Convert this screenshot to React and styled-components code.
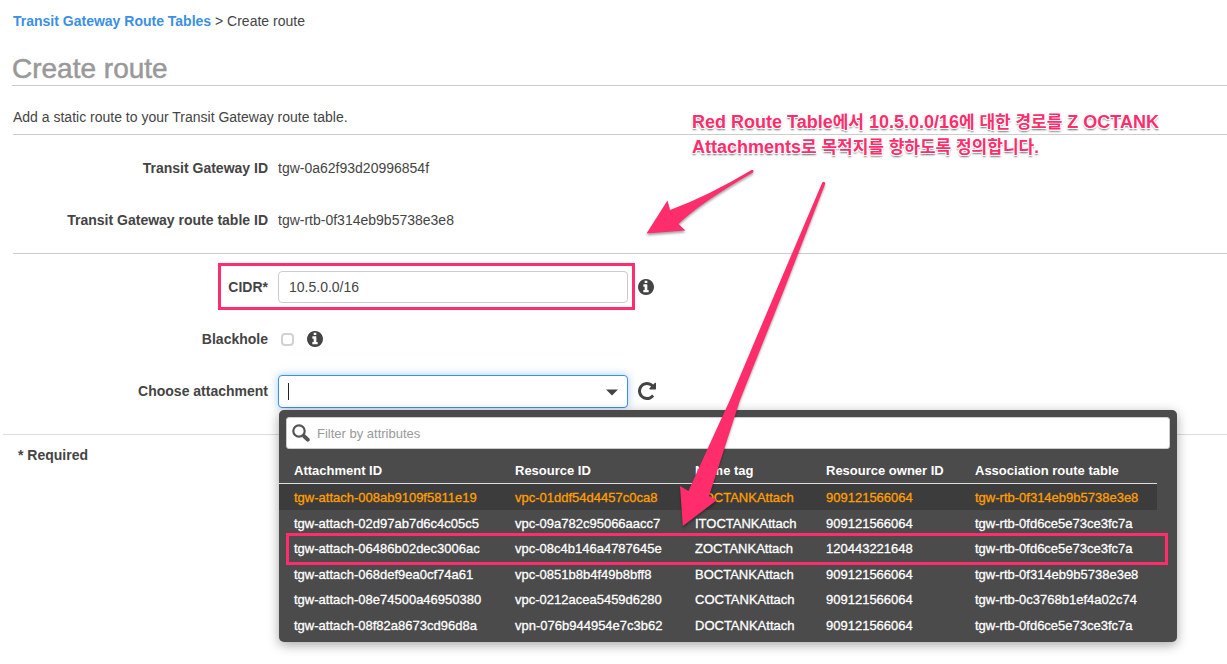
import React from 'react';
import styled, { createGlobalStyle } from 'styled-components';

const PINK = '#ff2d6b';
const INK = '#444';
const SANS = '"Liberation Sans", "Noto Sans CJK KR", sans-serif';

const GlobalStyle = createGlobalStyle`
  *, *::before, *::after { box-sizing: border-box; }
  body {
    margin: 0;
    background: #fff;
    color: ${INK};
    font-family: ${SANS};
    font-size: 14px;
    line-height: 20px;
  }
  input, button { font-family: inherit; font-size: inherit; color: inherit; }
`;

const Page = styled.main`
  position: relative;
  min-height: 100vh;
  overflow: hidden;
`;

const Header = styled.header`
  margin-left: 12px;
  padding-top: 11px;
  border-bottom: 1px solid #ccc;
`;

const Breadcrumb = styled.nav`
  padding-left: 1px;
`;

const Crumb = styled.a`
  color: #3b8fe4;
  font-weight: bold;
  text-decoration: none;
`;

const Title = styled.h1`
  margin: 21px 0 0;
  color: #999;
  font-size: 28px;
  font-weight: normal;
  line-height: 33px;
  -webkit-text-stroke: 0.5px currentColor;
`;

const Intro = styled.p`
  margin: 0 0 0 13px;
  padding: 21px 0 7px;
  border-bottom: 1px solid #ccc;
`;

const Section = styled.section`
  display: flex;
  flex-direction: column;
  gap: 20px;
  margin-left: 13px;
  padding: 17px 0;
  border-bottom: ${(p) => (p.$last ? 'none' : '1px solid #ccc')};
`;

const Row = styled.div`
  display: flex;
  align-items: center;
  gap: 10px;
  min-height: 32px;
`;

const Label = styled.label`
  flex: none;
  width: 255px;
  font-weight: bold;
  text-align: right;
`;

const Framed = styled.div`
  position: relative;
  display: flex;
  align-items: center;
  gap: 10px;

  &::after {
    content: '';
    position: absolute;
    inset: -8px -7px -7px 205px;
    border: 3px solid ${PINK};
    pointer-events: none;
  }
`;

const TextInput = styled.input`
  width: 350px;
  height: 32px;
  padding: 0 10px;
  border: 1px solid #ccc;
  border-radius: 4px;
  background: #fff;
`;

const Tick = styled.input`
  appearance: none;
  width: 13px;
  height: 13px;
  margin: 0 3px;
  border: 2px solid #d2d2d2;
  border-radius: 4px;
  background: #fff;
`;

const IconButton = styled.button`
  display: flex;
  padding: 0;
  border: 0;
  background: none;
`;

const Combo = styled.div`
  position: relative;
  height: 32px;
`;

const ComboInput = styled(TextInput)`
  display: block;
  height: 33px;
  border-color: #3b8fe4;
  outline: none;
  box-shadow: 0 0 8px rgba(59, 143, 228, 0.45);
`;

const Caret = styled.span`
  position: absolute;
  top: 8px;
  left: 10px;
  width: 1px;
  height: 17px;
  background: #222;
`;

const Chevron = styled.svg`
  position: absolute;
  top: 14px;
  right: 10px;
`;

const Menu = styled.div`
  position: absolute;
  z-index: 2;
  top: 35px;
  left: 1px;
  width: calc(100vw - 329px);
  padding: 7px 0 4px;
  border-radius: 5px;
  background: #4b4b4b;
  color: #fff;
  box-shadow: 0 3px 12px rgba(0, 0, 0, 0.35);
`;

const Filter = styled.label`
  display: flex;
  align-items: center;
  gap: 7px;
  height: 32px;
  margin: 0 7px;
  padding-left: 5px;
  border: 1px solid #ccc;
  border-radius: 3px;
  background: #fff;
`;

const FilterInput = styled.input`
  flex: 1;
  border: 0;
  outline: none;
  padding: 0;
  background: none;
  font-size: 13px;
  &::placeholder { color: #999; opacity: 1; }
`;

const Table = styled.table`
  width: calc(100% - 20px);
  margin-top: 8px;
  border-collapse: separate;
  border-spacing: 0;
  table-layout: fixed;
  font-size: 13px;
  line-height: 20px;
  white-space: nowrap;
`;

const Col = styled.col`
  width: ${(p) => p.$w};
`;

const HeadCell = styled.th`
  height: 27px;
  padding: 2px 0 0 15px;
  border-bottom: 1px solid #ddd;
  text-align: left;
`;

const BodyRow = styled.tr`
  position: relative;
  height: 26px;
  color: ${(p) => (p.$active ? '#ff9f00' : '#fff')};
  background: ${(p) => (p.$active ? '#3c3c3c' : 'none')};

  &:nth-child(2n + 3) { height: 25px; }

  ${(p) => p.$framed && `
    td:first-child::after {
      content: '';
      position: absolute;
      inset: -3px -11px -4px 7px;
      border: 3px solid ${PINK};
    }
  `}
`;

const Cell = styled.td`
  padding: 1px 0 0 15px;
  -webkit-text-stroke: 0.3px currentColor;
`;

const Footer = styled.footer`
  margin: 10px 0 0 3px;
  padding: 10px 15px;
  border-top: 1px solid #ddd;
  font-weight: bold;
`;

const Note = styled.p`
  position: absolute;
  z-index: 3;
  top: 110px;
  left: 692px;
  width: 490px;
  margin: 0;
  color: ${PINK};
  font-size: 18px;
  font-weight: bold;
  line-height: 25px;
  text-shadow: 1px 0 #fff, -1px 0 #fff, 0 1px #fff, 0 -1px #fff, 1px 1px #fff,
    -1px 1px #fff, 0 2px 2px rgba(0, 0, 0, 0.6);
`;

const Hangul = styled.span`
  font-size: 17px;
`;

const Arrows = styled.svg`
  position: absolute;
  z-index: 3;
  top: 160px;
  left: 640px;
  pointer-events: none;
  filter: drop-shadow(0 2px 1px rgba(0, 0, 0, 0.35));
`;

const InfoIcon = () => (
  <svg width="16" height="16" viewBox="0 128 1536 1536" aria-hidden="true">
    <path
      fill={INK}
      d="M1024 1376v-160q0-14-9-23t-23-9h-96v-512q0-14-9-23t-23-9h-320q-14 0-23 9t-9 23v160q0 14 9 23t23 9h96v320h-96q-14 0-23 9t-9 23v160q0 14 9 23t23 9h448q14 0 23-9t9-23zM896 480v-160q0-14-9-23t-23-9h-192q-14 0-23 9t-9 23v160q0 14 9 23t23 9h192q14 0 23-9t9-23zM1536 896q0 209-103 385.500T1153.500 1561 768 1664t-385.500-103T103 1281.500 0 896t103-385.500T382.500 231 768 128t385.500 103T1433 510.500 1536 896z"
    />
  </svg>
);

const RefreshIcon = () => (
  <svg width="18" height="18" viewBox="0 128 1536 1536" aria-hidden="true">
    <path
      fill={INK}
      d="M1536 256v448q0 26-19 45t-45 19h-448q-42 0-59-40-17-39 14-69l138-138Q969 384 768 384q-104 0-198.500 40.500T406 534 296.500 697.500 256 896t40.500 198.500T406 1258t163.500 109.500T768 1408q119 0 225-52t179-147q7-10 23-12 15 0 25 9l137 138q9 8 9.500 20.500t-7.500 22.500q-109 132-264 204.500T768 1664q-156 0-298-61t-245-164-164-245T0 896t61-298 164-245 245-164 298-61q147 0 284.500 55.500T1297 340l130-129q29-31 70-14 39 17 39 59z"
    />
  </svg>
);

const SearchIcon = () => (
  <svg width="18" height="18" viewBox="0 0 18 18" aria-hidden="true">
    <circle cx="7" cy="7" r="5.700" fill="none" stroke="#555" strokeWidth="2.200" />
    <path d="M11 11l1.500 1.500" stroke="#555" strokeWidth="2.200" />
    <path d="M12.300 12.300l3.400 3.400" stroke="#555" strokeWidth="4" strokeLinecap="round" />
  </svg>
);

const COLUMNS = [
  ['Attachment ID', '221px'],
  ['Resource ID', '180px'],
  ['Name tag', '131px'],
  ['Resource owner ID', '149px'],
  ['Association route table', 'auto'],
];

const ATTACHMENTS = [
  ['tgw-attach-008ab9109f5811e19', 'vpc-01ddf54d4457c0ca8', 'AOCTANKAttach', '909121566064', 'tgw-rtb-0f314eb9b5738e3e8'],
  ['tgw-attach-02d97ab7d6c4c05c5', 'vpc-09a782c95066aacc7', 'ITOCTANKAttach', '909121566064', 'tgw-rtb-0fd6ce5e73ce3fc7a'],
  ['tgw-attach-06486b02dec3006ac', 'vpc-08c4b146a4787645e', 'ZOCTANKAttach', '120443221648', 'tgw-rtb-0fd6ce5e73ce3fc7a'],
  ['tgw-attach-068def9ea0cf74a61', 'vpc-0851b8b4f49b8bff8', 'BOCTANKAttach', '909121566064', 'tgw-rtb-0f314eb9b5738e3e8'],
  ['tgw-attach-08e74500a46950380', 'vpc-0212acea5459d6280', 'COCTANKAttach', '909121566064', 'tgw-rtb-0c3768b1ef4a02c74'],
  ['tgw-attach-08f82a8673cd96d8a', 'vpn-076b944954e7c3b62', 'DOCTANKAttach', '909121566064', 'tgw-rtb-0fd6ce5e73ce3fc7a'],
];

const AttachmentMenu = () => (
  <Menu>
    <Filter>
      <SearchIcon />
      <FilterInput type="text" placeholder="Filter by attributes" aria-label="Filter by attributes" />
    </Filter>
    <Table>
      <colgroup>
        {COLUMNS.map(([name, w]) => <Col key={name} $w={w} />)}
      </colgroup>
      <thead>
        <tr>{COLUMNS.map(([name]) => <HeadCell key={name} scope="col">{name}</HeadCell>)}</tr>
      </thead>
      <tbody>
        {ATTACHMENTS.map((cells, i) => (
          <BodyRow key={cells[0]} $active={i === 0} $framed={i === 2}>
            {cells.map((text, c) => <Cell key={c}>{text}</Cell>)}
          </BodyRow>
        ))}
      </tbody>
    </Table>
  </Menu>
);

export default function App() {
  return (
    <>
      <GlobalStyle />
      <Page>
        <Header>
          <Breadcrumb aria-label="Breadcrumb">
            <Crumb href="#route-tables">Transit Gateway Route Tables</Crumb> &gt; Create route
          </Breadcrumb>
          <Title>Create route</Title>
        </Header>
        <Intro>Add a static route to your Transit Gateway route table.</Intro>
        <Section>
          <Row>
            <Label as="span">Transit Gateway ID</Label>
            <span>tgw-0a62f93d20996854f</span>
          </Row>
          <Row>
            <Label as="span">Transit Gateway route table ID</Label>
            <span>tgw-rtb-0f314eb9b5738e3e8</span>
          </Row>
        </Section>
        <Section $last>
          <Row>
            <Framed>
              <Label htmlFor="cidr">CIDR*</Label>
              <TextInput id="cidr" type="text" defaultValue="10.5.0.0/16" />
            </Framed>
            <IconButton type="button" aria-label="About CIDR"><InfoIcon /></IconButton>
          </Row>
          <Row>
            <Label htmlFor="blackhole">Blackhole</Label>
            <Tick id="blackhole" type="checkbox" />
            <IconButton type="button" aria-label="About blackhole"><InfoIcon /></IconButton>
          </Row>
          <Row>
            <Label htmlFor="attachment">Choose attachment</Label>
            <Combo>
              <ComboInput id="attachment" type="text" role="combobox" aria-expanded="true" />
              <Caret />
              <Chevron width="12" height="7" viewBox="0 0 12 7" aria-hidden="true">
                <path d="M0 0.500h12L6 6.500z" fill={INK} />
              </Chevron>
              <AttachmentMenu />
            </Combo>
            <IconButton type="button" aria-label="Refresh attachments"><RefreshIcon /></IconButton>
          </Row>
        </Section>
        <Footer>* Required</Footer>
        <Note>
          Red Route Table<Hangul>에서</Hangul> 10.5.0.0/16<Hangul>에 대한 경로를</Hangul> Z OCTANK
          <br />
          Attachments<Hangul>로 목적지를 향하도록 정의합니다.</Hangul>
        </Note>
        <Arrows width="200" height="380" viewBox="640 160 200 380" aria-hidden="true">
          <path
            d="M751.500 170Q708 196 670 210L667.500 200.500L646.500 233.500L685.500 230.500L678.500 224Q700 203 753 172.500Q754.500 169.500 751.500 170Z"
            fill={PINK}
          />
          <path
            d="M822.300 182.500L776.500 290L730 400Q706 452 688.500 491L680 486L682.800 526L717 500L709 496Q720 462 740 400L784 290L825.300 183.500Q824.500 180.500 822.300 182.500Z"
            fill={PINK}
          />
        </Arrows>
      </Page>
    </>
  );
}
